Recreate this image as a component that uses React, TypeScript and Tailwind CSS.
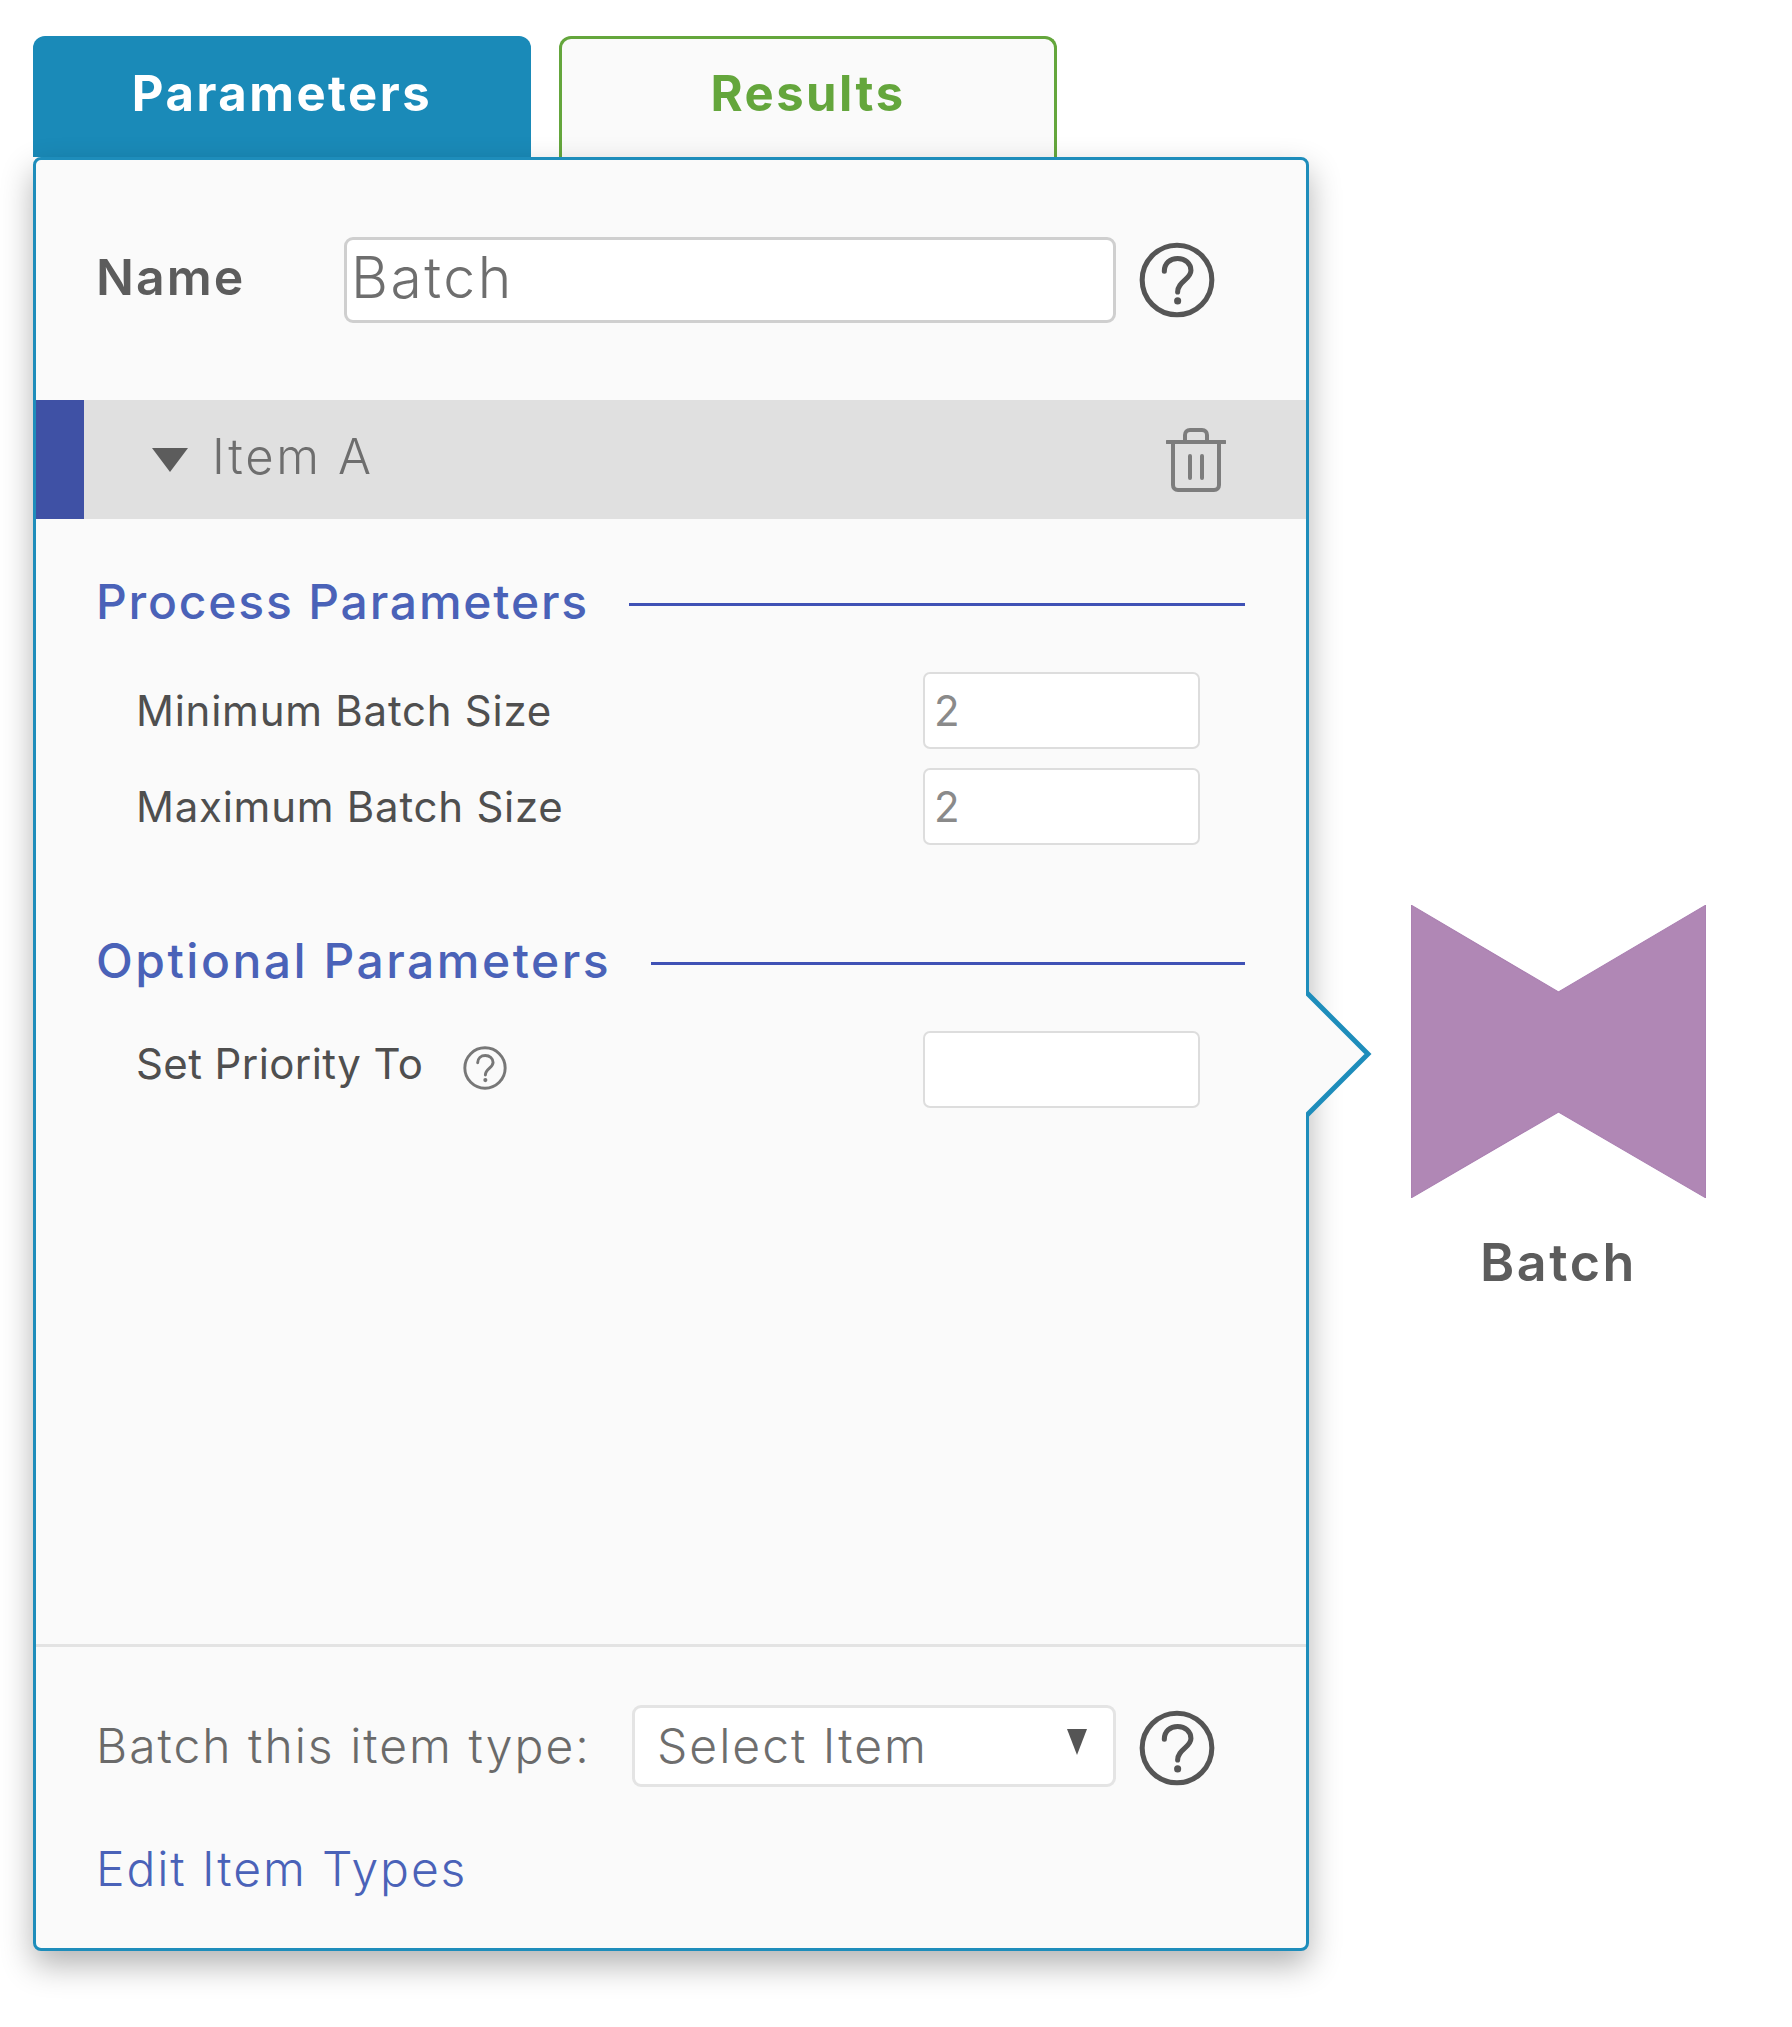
function HelpIcon({ className }: { className: string }) {
  return (
    <svg viewBox="0 0 60 60" className={className} fill="none" stroke="currentColor">
      <circle cx="30" cy="30" r="27.5" strokeWidth="4" />
      <path d="M20 23c0-6 4.500-10 10.500-10S41 17 41 22.500c0 7-10.500 8.500-10.500 17" strokeWidth="4" strokeLinecap="round" />
      <circle cx="30.500" cy="46.500" r="2.800" fill="currentColor" stroke="none" />
    </svg>
  );
}

function TrashIcon() {
  return (
    <svg viewBox="0 0 60 66" className="w-[60px] h-[66px] text-[#7d7d7d]" fill="none" stroke="currentColor" strokeWidth="4">
      <path d="M1 15h58" strokeLinecap="round" />
      <path d="M19 15V8c0-3 2-5 5-5h12c3 0 5 2 5 5v7" />
      <path d="M7 15v43c0 3 2 5 5 5h36c3 0 5-2 5-5V15" />
      <path d="M24 29v22M36 29v22" strokeLinecap="round" />
    </svg>
  );
}

function SectionTitle({ title, className }: { title: string; className: string }) {
  return (
    <div className="flex items-center">
      <h2 className={"mt-[2px] text-[48px] leading-[60px] font-medium text-[#4a62b8] whitespace-nowrap " + className}>{title}</h2>
      <div className="flex-1 h-[3px] bg-[#3f51b5] ml-[40px] mt-[6px]" />
    </div>
  );
}

function ParamRow({ label, value, help }: { label: string; value: string; help?: boolean }) {
  return (
    <div className="flex items-center h-[76px] pl-[40px] pr-[45px]">
      <span className={help ? "text-[42px] text-[#4f4f4f] tracking-[0.4px] whitespace-nowrap mb-[12px]" : "text-[42px] text-[#4f4f4f] tracking-[0.75px] whitespace-nowrap"}>{label}</span>
      {help && <HelpIcon className="w-[44px] h-[44px] ml-[40px] mb-[3px] text-[#777777]" />}
      <input
        readOnly
        value={value}
        className="ml-auto w-[277px] h-[77px] bg-white border-2 border-[#dddddd] rounded-[7px] px-[9px] text-[42px] text-[#8a8a8a] outline-none"
      />
    </div>
  );
}

export default function App() {
  return (
    <div className="w-[1792px] h-[2027px] bg-white pl-[33px] pt-[36px] flex font-['Inter',sans-serif]">
      {/* tabs + panel */}
      <div className="w-[1276px]">
        <div className="flex h-[121px] gap-[28px]">
          <div className="w-[498px] bg-[#1a8ab8] rounded-t-[12px] text-white font-bold text-[49px] tracking-[2.500px] flex justify-center pt-[26px] leading-[64px]">
            Parameters
          </div>
          <div className="w-[498px] bg-[#fafafa] border-[3px] border-b-0 border-[#64a63c] rounded-t-[12px] text-[#64a63c] font-bold text-[49px] tracking-[2.500px] flex justify-center pt-[23px] leading-[64px]">
            Results
          </div>
        </div>

        <div className="relative h-[1794px] bg-[#fafafa] border-[3px] border-[#1e8dbb] rounded-[8px] shadow-[0_14px_32px_rgba(0,0,0,0.3)] flex flex-col">
          {/* name row */}
          <div className="flex items-center h-[240px] pl-[60px]">
            <span className="w-[248px] text-[50px] font-semibold text-[#5c5c5c] tracking-[2px] mb-[5px]">Name</span>
            <input
              readOnly
              value="Batch"
              className="w-[772px] h-[86px] bg-white border-[3px] border-[#cfcfcf] rounded-[9px] pl-[4px] pb-[5px] text-[57px] font-light text-[#6e6e6e] tracking-[2.500px] outline-none"
            />
            <HelpIcon className="w-[76px] h-[76px] ml-[23px] text-[#555555]" />
          </div>

          {/* item header */}
          <div className="flex items-center h-[119px] bg-[#e0e0e0] pr-[80px]">
            <div className="w-[48px] h-full bg-[#3f51a5]" />
            <svg viewBox="0 0 36 24" className="w-[36px] h-[24px] ml-[68px]">
              <path d="M0 0h36L18 24z" fill="#5c5c5c" />
            </svg>
            <span className="ml-[24px] text-[49px] font-light text-[#6e6e6e] tracking-[2.600px] mb-[5px]">Item A</span>
            <div className="ml-auto">
              <TrashIcon />
            </div>
          </div>

          {/* params */}
          <div className="flex-1 pl-[60px] pr-[61px] pt-[51px]">
            <SectionTitle title="Process Parameters" className="tracking-[1.800px]" />
            <div className="mt-[40px] flex flex-col gap-[20px]">
              <ParamRow label="Minimum Batch Size" value="2" />
              <ParamRow label="Maximum Batch Size" value="2" />
            </div>
            <div className="mt-[85px]">
              <SectionTitle title="Optional Parameters" className="tracking-[2.500px]" />
            </div>
            <div className="mt-[40px]">
              <ParamRow label="Set Priority To" value="" help />
            </div>
          </div>

          {/* footer */}
          <div className="border-t-[3px] border-[#e3e3e3] h-[304px] pl-[60px] pt-[58px]">
            <div className="flex items-center">
              <span className="w-[536px] text-[48px] font-light text-[#6a6a6a] tracking-[2px] whitespace-nowrap">Batch this item type:</span>
              <div className="w-[484px] h-[82px] bg-white border-[3px] border-[#e4e4e4] rounded-[9px] flex items-center pl-[22px] pr-[26px]">
                <span className="text-[48px] font-light text-[#6e6e6e] tracking-[2px]">Select Item</span>
                <svg viewBox="0 0 20 26" className="w-[20px] h-[26px] ml-auto mb-[8px]">
                  <path d="M0 0h20L10 26z" fill="#555555" />
                </svg>
              </div>
              <HelpIcon className="w-[76px] h-[76px] ml-[23px] mt-[4px] text-[#555555]" />
            </div>
            <a className="block mt-[46px] text-[48px] font-light text-[#4a62b8] tracking-[1.900px]">Edit Item Types</a>
          </div>

          {/* caret pointing at the batch node */}
          <svg viewBox="0 0 66 130" preserveAspectRatio="none" className="absolute left-[1270px] top-[831px] w-[66px] h-[126px]">
            <path d="M0 1 L62 65 L0 129" fill="#fafafa" stroke="#1e8dbb" strokeWidth="5" />
          </svg>
        </div>
      </div>

      {/* batch node */}
      <div className="ml-[102px] mt-[869px] flex flex-col items-center w-[295px]">
        <svg viewBox="0 0 292 293" preserveAspectRatio="none" className="w-[295px] h-[293px]">
          <path d="M0 0 L146 87 L292 0 V293 L146 207 L0 293 Z" fill="#b087b5" stroke="#a97eb0" strokeWidth="1" />
        </svg>
        <span className="mt-[33px] text-[52px] font-semibold text-[#5c5c5c] tracking-[2.600px] leading-[64px]">Batch</span>
      </div>
    </div>
  );
}
